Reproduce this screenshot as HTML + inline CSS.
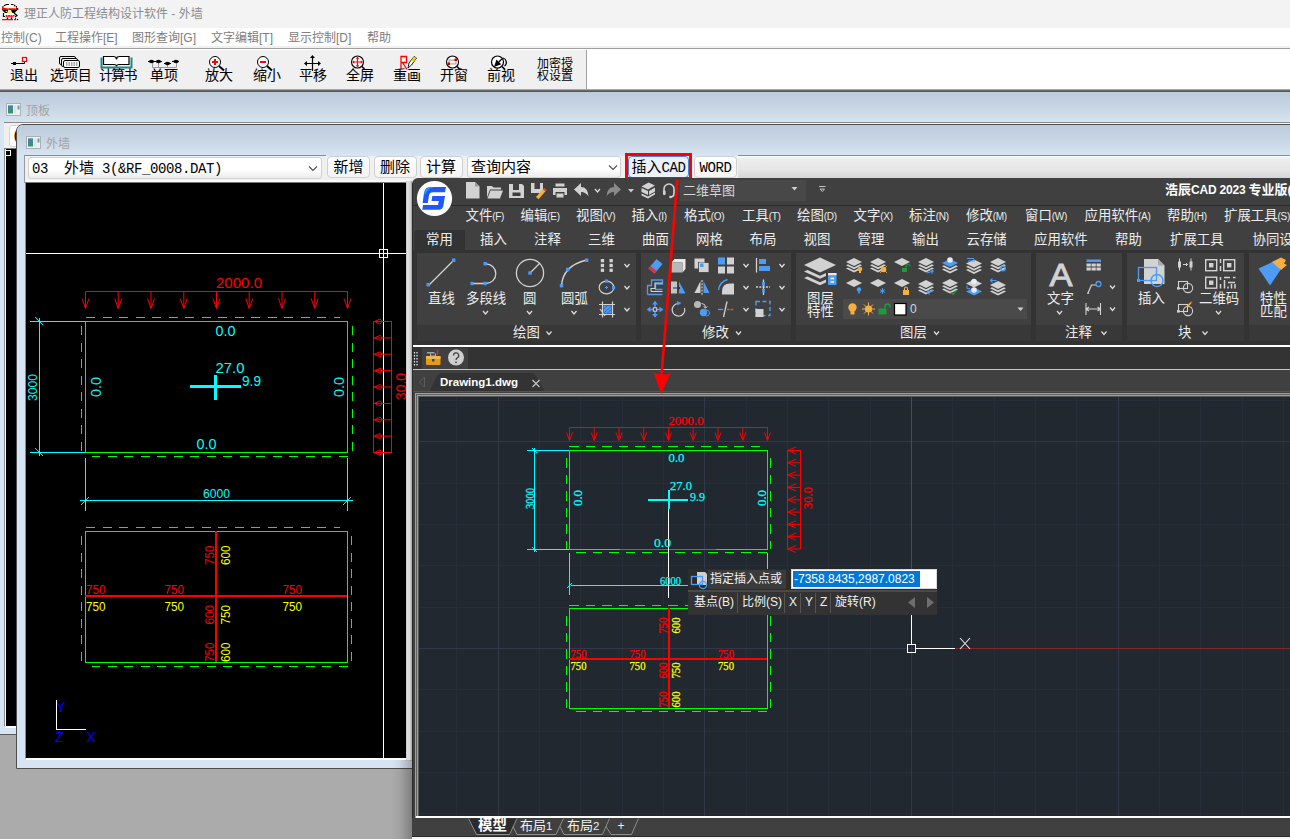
<!DOCTYPE html>
<html lang="zh-CN">
<head>
<meta charset="utf-8">
<title>理正人防工程结构设计软件 - 外墙</title>
<style>
*{box-sizing:border-box;margin:0;padding:0}
html,body{width:1290px;height:839px;overflow:hidden;background:#ababab}
body{position:relative;font-family:"Liberation Sans","Noto Sans CJK SC",sans-serif;font-size:12px;color:#000}
.abs{position:absolute}
#titlebar{left:0;top:0;width:1290px;height:28px;background:#f3f3f3}
#titlebar .t{left:24px;top:6.500px;font-size:12px;line-height:15px;color:#8c8c8c;white-space:nowrap}
#menubar{left:0;top:28px;width:1290px;height:18px;background:#fff}
#menubar span{position:absolute;top:3px;font-size:12px;line-height:15px;color:#7d7d7d;white-space:nowrap}
#tbline{left:0;top:46px;width:1290px;height:3px;background:#a0a0a0;border-top:2px solid #f0f0f0}
#toolbar{left:0;top:49px;width:1290px;height:40px;background:#fff}
#toolbar .bg{left:0;top:1px;width:587px;height:39px;background:#f0f0f0;border-right:1px solid #a0a0a0}
.tb{position:absolute;top:18px;font-size:14px;line-height:16px;color:#000;white-space:nowrap;letter-spacing:-0.1px;font-family:"Liberation Sans","Noto Sans CJK SC",sans-serif}
.tbi{position:absolute;top:0;left:0}
#mdiedge{left:0;top:89px;width:1290px;height:3px;background:linear-gradient(#c8c8c8,#6a6a6a 50%,#4d4d4d)}
/* child windows */
.cap{background:linear-gradient(#bccbdb,#c5d3e2 40%,#d7e4f1)}
#w1{left:0;top:92px;width:1290px;height:643px;background:#d7e4f3;border-bottom:1px solid #5a5a5a}
#w1 .cap{left:0;top:0;width:1290px;height:31px}
#w1 .ttl,#w2 .ttl{font-size:12px;line-height:14px;color:#a3a3a3;white-space:nowrap}
#w2{left:16px;top:124px;width:1280px;height:645px;background:#d7e4f3;border:1px solid #4e4e4e;border-radius:7px 0 0 0}
#w2 .cap{left:0;top:0;width:1280px;height:30px;border-radius:6px 0 0 0}
.btn{position:absolute;top:156px;height:22px;border:1px solid #d0d0d0;border-radius:4px;background:linear-gradient(#fefefe,#f4f4f4);font-size:15px;line-height:19px;padding-top:1.500px;text-align:center;white-space:nowrap;font-family:"Liberation Mono","Noto Sans CJK SC",monospace}
.cmb{position:absolute;top:155.500px;height:22px;border:1px solid #d0d0d0;border-radius:3px;background:linear-gradient(#fff 60%,#ececec);font-size:15px;line-height:19px;padding-top:2px;white-space:nowrap;font-family:"Liberation Mono","Noto Sans CJK SC",monospace}
</style>
</head>
<body>
<!-- ===== main title bar ===== -->
<div id="titlebar" class="abs">
<svg class="abs" style="left:0;top:0" width="22" height="24" viewBox="0 0 22 24">
<path d="M4 6.500Q5 4 9 4H11Q15 4 16 6.500L17 10H2.500Z" fill="#fff"/>
<path d="M6 4.500h3M11 4.500h2.500M4 5.800l2-1M14 5l1.500 1.500M2.500 6.500h1M16 6.500h1" stroke="#000" stroke-width="1.100" fill="none"/>
<path d="M2 6.800L6 8.200H13L17 6.800V10H2Z" fill="#f00"/>
<path d="M4 6.200l2 1.800h-2zM13 8.200l3-2.200v2.500zM8 8.200l1 1h-1.500z" fill="#ff0"/>
<circle cx="17.500" cy="9" r=".9" fill="#000"/>
<path d="M2 10H8L7.500 12.500Q6 13.500 4.500 12.500ZM11 10H17.500L15 12.500Q13.500 13.500 12 12.500Z" fill="#000"/>
<circle cx="6.300" cy="11.400" r=".7" fill="#fff"/>
<path d="M8.200 10l2.800 3h-3z" fill="#ff0"/>
<path d="M4 13H15V17H4Z" fill="#fff"/>
<path d="M3.500 13V16.500H5M14 13l3 2.500-2 1.500" stroke="#000" stroke-width="1.200" fill="none"/>
<path d="M4.500 15h10.500l-1.200 2l-1.200-2l-1.200 2l-1.200-2l-1.200 2l-1.200-2l-1.200 2l-1.200-2z" fill="#f00"/>
<path d="M5.500 16.800h8" stroke="#f00" stroke-width="1"/>
<path d="M7.500 17.500v2M11.500 17.500v2" stroke="#000" stroke-width="1.300"/>
<path d="M2 19.600h11M14 19.600h2" stroke="#f00" stroke-width="1.200"/>
<circle cx="17.500" cy="19.500" r=".8" fill="#000"/><circle cx="15.500" cy="18.500" r=".6" fill="#000"/>
</svg>
<div class="abs t">理正人防工程结构设计软件 - 外墙</div>
</div>
<!-- ===== menu bar ===== -->
<div id="menubar" class="abs">
<span style="left:1px">控制(C)</span><span style="left:55px">工程操作[E]</span><span style="left:132px">图形查询[G]</span><span style="left:211px">文字编辑[T]</span><span style="left:288px">显示控制[D]</span><span style="left:367px">帮助</span>
</div>
<div id="tbline" class="abs"></div>
<!-- ===== toolbar ===== -->
<div id="toolbar" class="abs">
<div class="abs bg"></div>
<svg class="tbi" width="590" height="40" viewBox="0 0 590 40"><path d="M11 14.5H24.5V12" fill="none" stroke="#000" stroke-width="1"/><rect x="13" y="13" width="3" height="3" fill="#000"/><rect x="22.500" y="8.5" width="4" height="4" fill="#fff" stroke="#f00" stroke-width="1.200"/>
<rect x="59.500" y="7.5" width="16" height="8" rx="1.500" fill="#f0f0f0" stroke="#000"/><rect x="61.500" y="9.5" width="16" height="8" rx="1.500" fill="#f0f0f0" stroke="#000"/><rect x="63.500" y="11.5" width="16" height="7" rx="1.500" fill="#fff" stroke="#000"/><path d="M66 14h12M66 16h12" stroke="#555" stroke-dasharray="1.500 1"/>
<path d="M101.500 8.5V18.5H131.500V8.5" fill="none" stroke="#1f8a8a" stroke-width="2"/><path d="M103.500 7.5h10q3 0 3 3q0-3 3-3h9.500v8h-10q-2.500 0-2.500 2q0-2-2.500-2h-10.500z" fill="#fff" stroke="#000" stroke-width="1.200"/>
<path d="M152.500 12V18.5H176.500V12M158.500 12V18.5M167.500 14V18.5" fill="none" stroke="#999"/><path d="M148 12.5H162M164 14.5H171M172 12.5H179" stroke="#000" stroke-width="1.200"/>
<ellipse cx="151.5" cy="12.5" rx="2.600" ry="1.700" fill="#000"/>
<ellipse cx="158.5" cy="12.5" rx="2.600" ry="1.700" fill="#000"/>
<ellipse cx="167.5" cy="14.5" rx="2.600" ry="1.700" fill="#000"/>
<ellipse cx="176" cy="12.5" rx="2.600" ry="1.700" fill="#000"/>
<circle cx="215" cy="13" r="5.500" fill="#fff" stroke="#000" stroke-width="1"/><path d="M219 17l5 4.500" stroke="#000" stroke-width="2"/>
<path d="M212 13h6M215 10v6" stroke="#f00" stroke-width="2"/>
<circle cx="263" cy="13" r="5.500" fill="#fff" stroke="#000" stroke-width="1"/><path d="M267 17l5 4.500" stroke="#000" stroke-width="2"/>
<path d="M260 13h6" stroke="#f00" stroke-width="2"/>
<path d="M312.500 7V22M305 14.5H320" stroke="#000" stroke-width="1.200"/><path d="M312.500 6l-2.500 3h5zM304 14.5l3-2.500v5zM321 14.5l-3-2.500v5z" fill="#000"/>
<circle cx="357.500" cy="13" r="6" fill="#fff" stroke="#000" stroke-width="1.100"/><path d="M357.500 8.5v9M353 13h9" stroke="#f00" stroke-width="1.200"/><path d="M357.500 7.5l-1.800 2.200h3.600zM357.500 18.5l-1.800-2.200h3.600zM352 13l2.200-1.800v3.600zM363 13l-2.200-1.800v3.600z" fill="#f00"/><path d="M362 17.5l2.500 2.500" stroke="#000" stroke-width="1.500"/>
<path d="M401 20V7.5H406.500V13.5H401M402.500 13.5L407 20.5" fill="none" stroke="#f00" stroke-width="1.300"/><path d="M408 19l1-5 5-6.500 2.500 1.500-5 7z" fill="#fff" stroke="#000" stroke-width=".9"/><path d="M411 11.5l3-4 2.500 1.500-3 4z" fill="#e5d200"/>
<circle cx="452.500" cy="13" r="6" fill="#fff" stroke="#000" stroke-width="1.100"/><rect x="449" y="11" width="7" height="4" fill="#eee" stroke="#888" stroke-width=".8"/><rect x="447.500" y="13.5" width="2.500" height="2.500" fill="#c00"/><rect x="454.500" y="9.5" width="2.500" height="2.500" fill="#c00"/><path d="M457 17.5l3 3" stroke="#000" stroke-width="1.600"/>
<circle cx="497.500" cy="13" r="6" fill="#fff" stroke="#000" stroke-width="1.200"/><path d="M503 9a4.500 4.500 0 0 1 1.500 8" fill="none" stroke="#000" stroke-width="1.200"/><path d="M494 18l2.500-7.500 1.800 2 3.200-3 .8.800-3 3.200 2 1.800z" fill="#000"/><path d="M502 17.5l3 3" stroke="#000" stroke-width="1.500"/></svg>
<span class="tb" style="left:10px">退出</span>
<span class="tb" style="left:50px">选项目</span>
<span class="tb" style="left:99px;letter-spacing:-1.8px">计算书</span>
<span class="tb" style="left:150px">单项</span>
<span class="tb" style="left:205px">放大</span>
<span class="tb" style="left:253px">缩小</span>
<span class="tb" style="left:299px">平移</span>
<span class="tb" style="left:346px">全屏</span>
<span class="tb" style="left:393px">重画</span>
<span class="tb" style="left:440px">开窗</span>
<span class="tb" style="left:487px">前视</span>
<span class="tb" style="left:537px;top:9px;font-size:12px;line-height:12px;letter-spacing:0">加密授<br>权设置</span>
</div>
<div id="mdiedge" class="abs"></div>

<!-- ===== child window 1: 顶板 ===== -->
<div id="w1" class="abs">
<div class="abs cap"></div>
<svg class="abs" style="left:6px;top:11px" width="15" height="13" viewBox="0 0 15 13"><rect x=".5" y=".5" width="14" height="12" fill="#eef1f4" stroke="#aab0b8"/><rect x="2" y="2.5" width="5" height="8" fill="#3d8f78"/><rect x="2" y="2.5" width="5" height="4" fill="#4a7fb0" opacity=".6"/><rect x="8" y="2.5" width="2.5" height="8" fill="#dfe3e6"/><rect x="11.5" y="2.5" width="2" height="4" fill="#6aa58f"/></svg>
<div class="abs ttl" style="left:26px;top:12px">顶板</div>
<div class="abs" style="left:4px;top:30px;width:1286px;height:27px;background:#f0f0f0;border-top:1px solid #8a8a8a"></div>
<div class="abs" style="left:9px;top:32.500px;width:300px;height:22px;background:#fff;border:1px solid #d4d4d4;border-radius:3px"></div>
<div class="abs" style="left:12px;top:35px;font-size:15px;line-height:19px;font-family:'Liberation Mono',monospace">(</div>
<div class="abs" style="left:4px;top:56px;width:13px;height:578px;background:#000;border-left:1px solid #8a8a8a;border-top:1px solid #777"></div>
<div class="abs" style="left:5px;top:57px;width:1px;height:578px;background:#fff"></div>
<div class="abs" style="left:5px;top:634px;width:12px;height:2px;background:#fff"></div>
<div class="abs" style="left:5px;top:58px;width:6px;height:6px;border:1px solid #fff;background:#000"></div>
</div>

<div class="abs" style="left:18px;top:123px;width:1272px;height:1px;background:#f2f5f8"></div>
<!-- ===== child window 2: 外墙 ===== -->
<div id="w2" class="abs">
<div class="abs cap"></div>
<svg class="abs" style="left:9px;top:11px" width="15" height="13" viewBox="0 0 15 13"><rect x=".5" y=".5" width="14" height="12" fill="#eef1f4" stroke="#aab0b8"/><rect x="2" y="2.5" width="5" height="8" fill="#3d8f78"/><rect x="2" y="2.5" width="5" height="4" fill="#4a7fb0" opacity=".6"/><rect x="8" y="2.5" width="2.5" height="8" fill="#dfe3e6"/><rect x="11.5" y="2.5" width="2" height="4" fill="#6aa58f"/></svg>
<div class="abs ttl" style="left:29px;top:12px">外墙</div>
</div>
<!-- client area of 外墙 (page coords) -->
<div class="abs" style="left:24px;top:155px;width:1266px;height:28px;background:#f0f0f0;border-left:1px solid #9a9a9a;border-top:1px solid #dfe3e8"></div>
<div class="abs" style="left:24px;top:155px;width:302px;height:1px;background:#8c8c8c"></div>
<div class="abs" style="left:738px;top:155px;width:552px;height:23px;background:linear-gradient(#fff,#eee 12%,#e6e6e6 60%,#d6d6d6);border-top:1px solid #8c8c8c"></div>
<div class="cmb" style="left:28px;top:157px;width:294px;padding:1px 0 0 3px;line-height:21px"><span style="font-size:14px;letter-spacing:-.4px">03&nbsp;&nbsp;</span>外墙<span style="font-size:14px;letter-spacing:-.4px">&nbsp;3(&amp;RF_0008.DAT)</span></div>
<svg class="abs" style="left:308px;top:165px" width="12" height="8"><path d="M1 1.500l4 4 4-4" fill="none" stroke="#555" stroke-width="1.2"/></svg>
<div class="btn" style="left:327px;width:43px">新增</div>
<div class="btn" style="left:373.500px;width:43px">删除</div>
<div class="btn" style="left:419.500px;width:43px">计算</div>
<div class="cmb" style="left:467px;width:154px;padding-left:3px">查询内容</div>
<svg class="abs" style="left:608px;top:164px" width="12" height="8"><path d="M1 1.500l4 4 4-4" fill="none" stroke="#555" stroke-width="1.2"/></svg>
<div class="btn" style="left:628px;width:61px;border-color:#3f8ad8;background:#eaf1fa"><span style="">插入</span><span style="font-size:14px;letter-spacing:-.4px">CAD</span></div>
<div class="abs" style="left:625px;top:153px;width:67px;height:27px;border:3px solid #f00"></div>
<div class="btn" style="left:694px;width:43px;font-size:14px;letter-spacing:-.4px">WORD</div>

<!-- left CAD view -->
<div class="abs" style="left:25px;top:180px;width:381px;height:2px;background:#fafafa"></div>
<div class="abs" style="left:25px;top:182px;width:383px;height:578px;background:#000;border-left:1px solid #8a8a8a;border-right:2px solid #fff;border-bottom:2px solid #fff;border-top:1px solid #777"></div>
<svg class="abs" style="left:26px;top:183px" width="380" height="575" viewBox="26 183 380 575"><g shape-rendering="crispEdges" fill="none" stroke-width="1">
<path d="M26 253.5H406M383.5 183V758" stroke="#fff"/>
<rect x="379.5" y="249.5" width="8" height="8" stroke="#fff"/>
<path d="M85.5 291.5H347.5" stroke="#f00"/>
</g>
<g fill="none" stroke="#f00" stroke-width="1">
<path d="M85.5 291.5V308M82.0 298.5L85.5 308.5L89.0 298.5"/>
<path d="M118.2 291.5V308M114.8 298.5L118.2 308.5L121.8 298.5"/>
<path d="M151.0 291.5V308M147.5 298.5L151.0 308.5L154.5 298.5"/>
<path d="M183.8 291.5V308M180.2 298.5L183.8 308.5L187.2 298.5"/>
<path d="M216.5 291.5V308M213.0 298.5L216.5 308.5L220.0 298.5"/>
<path d="M249.2 291.5V308M245.8 298.5L249.2 308.5L252.8 298.5"/>
<path d="M282.0 291.5V308M278.5 298.5L282.0 308.5L285.5 298.5"/>
<path d="M314.8 291.5V308M311.2 298.5L314.8 308.5L318.2 298.5"/>
<path d="M347.5 291.5V308M344.0 298.5L347.5 308.5L351.0 298.5"/>
</g>
<g font-family="Liberation Sans,sans-serif" font-weight="400">
<text x="216" y="288.3" fill="#f00" font-size="15" text-anchor="start" textLength="46" lengthAdjust="spacingAndGlyphs">2000.0</text>
</g>
<g shape-rendering="crispEdges" fill="none" stroke="#0f0" stroke-width="1">
<rect x="85.5" y="321.5" width="262" height="131"/>
<path d="M86 317.5H340M347.5 456.5H92" stroke-dasharray="9 7.5"/>
<path d="M81.5 326V452M352.5 326V452" stroke-dasharray="9 7.5"/>
<rect x="85.5" y="531.5" width="262" height="131"/>
<path d="M86 527.5H340M347.5 666.5H92" stroke-dasharray="9 7.5"/>
<path d="M81.5 536V662M351.5 536V662" stroke-dasharray="9 7.5"/>
</g>
<g shape-rendering="crispEdges" fill="none" stroke="#0ff" stroke-width="1">
<path d="M30 321.5H85M30 452.5H85M39.5 318V456"/>
<path d="M85.5 458V511M347.5 458V511M80 500.5H353"/>
</g>
<g fill="none" stroke="#0ff" stroke-width="1">
<path d="M35 317l8 8M35 448l8 8M81 505l8-8M343 505l8-8"/>
</g>
<g shape-rendering="crispEdges" stroke="#0ff" stroke-width="3"><path d="M190 386.5H241M215.5 375V400"/></g>
<g shape-rendering="crispEdges" fill="none" stroke="#f00" stroke-width="1"><rect x="373.5" y="321.5" width="18" height="131"/></g>
<g fill="none" stroke="#f00" stroke-width="1">
<path d="M391.5 321.5H374M380 319.0L374.5 321.5L380 324.0M380 319.0Q384 321.5 380 324.0"/>
<path d="M391.5 337.9H374M380 335.4L374.5 337.9L380 340.4M380 335.4Q384 337.9 380 340.4"/>
<path d="M391.5 354.2H374M380 351.8L374.5 354.2L380 356.8M380 351.8Q384 354.2 380 356.8"/>
<path d="M391.5 370.6H374M380 368.1L374.5 370.6L380 373.1M380 368.1Q384 370.6 380 373.1"/>
<path d="M391.5 387.0H374M380 384.5L374.5 387.0L380 389.5M380 384.5Q384 387.0 380 389.5"/>
<path d="M391.5 403.4H374M380 400.9L374.5 403.4L380 405.9M380 400.9Q384 403.4 380 405.9"/>
<path d="M391.5 419.8H374M380 417.2L374.5 419.8L380 422.2M380 417.2Q384 419.8 380 422.2"/>
<path d="M391.5 436.1H374M380 433.6L374.5 436.1L380 438.6M380 433.6Q384 436.1 380 438.6"/>
<path d="M391.5 452.5H374M380 450.0L374.5 452.5L380 455.0M380 450.0Q384 452.5 380 455.0"/>
</g>
<g shape-rendering="crispEdges" stroke="#f00" stroke-width="2"><path d="M85 596H347M215.5 531V662"/></g>
<g font-family="Liberation Sans,sans-serif" font-weight="400">
<text x="215.5" y="336.2" fill="#0ff" font-size="15" text-anchor="start" textLength="20" lengthAdjust="spacingAndGlyphs">0.0</text>
<text x="215.5" y="373.4" fill="#0ff" font-size="15" text-anchor="start" textLength="29" lengthAdjust="spacingAndGlyphs">27.0</text>
<text x="242" y="386" fill="#0ff" font-size="15" text-anchor="start" textLength="19" lengthAdjust="spacingAndGlyphs">9.9</text>
<text x="196.5" y="449.2" fill="#0ff" font-size="15" text-anchor="start" textLength="20" lengthAdjust="spacingAndGlyphs">0.0</text>
<text x="203" y="498" fill="#0ff" font-size="13.5" text-anchor="start" textLength="27" lengthAdjust="spacingAndGlyphs">6000</text>
<text x="37" y="401" fill="#0ff" font-size="13.5" text-anchor="start" transform="rotate(-90 37 401)" textLength="27" lengthAdjust="spacingAndGlyphs">3000</text>
<text x="101" y="397" fill="#0ff" font-size="15" text-anchor="start" transform="rotate(-90 101 397)" textLength="20" lengthAdjust="spacingAndGlyphs">0.0</text>
<text x="344" y="397" fill="#0ff" font-size="15" text-anchor="start" transform="rotate(-90 344 397)" textLength="20" lengthAdjust="spacingAndGlyphs">0.0</text>
<text x="406" y="400" fill="#f00" font-size="15" text-anchor="start" transform="rotate(-90 406 400)" textLength="27" lengthAdjust="spacingAndGlyphs">30.0</text>
<text x="86" y="594" fill="#f00" font-size="13.5" text-anchor="start" textLength="19.5" lengthAdjust="spacingAndGlyphs">750</text>
<text x="86" y="611" fill="#ff0" font-size="13.5" text-anchor="start" textLength="19.5" lengthAdjust="spacingAndGlyphs">750</text>
<text x="164.5" y="594" fill="#f00" font-size="13.5" text-anchor="start" textLength="19.5" lengthAdjust="spacingAndGlyphs">750</text>
<text x="164.5" y="611" fill="#ff0" font-size="13.5" text-anchor="start" textLength="19.5" lengthAdjust="spacingAndGlyphs">750</text>
<text x="282.5" y="594" fill="#f00" font-size="13.5" text-anchor="start" textLength="19.5" lengthAdjust="spacingAndGlyphs">750</text>
<text x="282.5" y="611" fill="#ff0" font-size="13.5" text-anchor="start" textLength="19.5" lengthAdjust="spacingAndGlyphs">750</text>
<text x="213.5" y="565" fill="#f00" font-size="13.5" text-anchor="start" transform="rotate(-90 213.5 565)" textLength="19.5" lengthAdjust="spacingAndGlyphs">750</text>
<text x="230" y="565" fill="#ff0" font-size="13.5" text-anchor="start" transform="rotate(-90 230 565)" textLength="19.5" lengthAdjust="spacingAndGlyphs">600</text>
<text x="213.5" y="624.5" fill="#f00" font-size="13.5" text-anchor="start" transform="rotate(-90 213.5 624.5)" textLength="19.5" lengthAdjust="spacingAndGlyphs">600</text>
<text x="230" y="624.5" fill="#ff0" font-size="13.5" text-anchor="start" transform="rotate(-90 230 624.5)" textLength="19.5" lengthAdjust="spacingAndGlyphs">750</text>
<text x="213.5" y="662" fill="#f00" font-size="13.5" text-anchor="start" transform="rotate(-90 213.5 662)" textLength="19.5" lengthAdjust="spacingAndGlyphs">750</text>
<text x="230" y="662" fill="#ff0" font-size="13.5" text-anchor="start" transform="rotate(-90 230 662)" textLength="19.5" lengthAdjust="spacingAndGlyphs">600</text>
<text x="56" y="712" fill="#00f" font-size="14" text-anchor="start">Y</text>
<text x="55" y="742" fill="#00f" font-size="14" text-anchor="start">Z</text>
<text x="86.5" y="742" fill="#00f" font-size="14" text-anchor="start">X</text>
</g>
<g shape-rendering="crispEdges" fill="none" stroke="#fff"><path d="M56.5 700V729.5H86"/></g></svg>

<!-- ===== CAD window ===== -->
<div class="abs" style="left:406px;top:181px;width:6px;height:580px;background:linear-gradient(90deg,#bcbcbc,#e2e2e2 25%,#d6d6d6 60%,#c6c6c6 85%,#8c8c8c)"></div>
<div class="abs" style="left:392px;top:760px;width:20px;height:79px;background:linear-gradient(90deg,rgba(0,0,0,0),rgba(0,0,0,.06) 40%,rgba(0,0,0,.26))"></div>
<div id="cad" class="abs" style="left:412px;top:178px;width:878px;height:661px;background:#404040;border-radius:6px 0 0 0;overflow:hidden">
<div class="abs" style="left:-412px;top:-178px;width:1290px;height:839px">
<style>
.c{position:absolute;white-space:nowrap;color:#ececec;font-family:"Liberation Sans","Noto Sans CJK SC",sans-serif}
.m{top:207px;font-size:13.400px;line-height:17px}
.m i{font-style:normal;font-size:10px;letter-spacing:-0.3px}
.rt{top:231px;font-size:13.400px;line-height:17px}
.pn{position:absolute;top:253px;height:88px;background:#404040}
.pn b{position:absolute;left:0;right:0;bottom:0;height:16px;background:#383838}
.pl{top:291.500px;font-size:13.400px;line-height:13px;text-align:center}
.pt{top:324px;font-size:13.400px;line-height:17px}
</style>
<div class="abs" style="left:412px;top:205px;width:878px;height:1px;background:#2a2a2a"></div>
<div class="abs" style="left:680px;top:180px;width:126px;height:21px;background:#484848"></div>
<div class="c" style="left:683px;top:182px;font-size:13px;line-height:17px;color:#d8d8d8">二维草图</div>
<div class="c" style="left:1165px;top:181px;font-size:13px;line-height:18px;font-weight:bold;color:#fff">浩辰<span style="font-size:12px;letter-spacing:-.2px">CAD 2023 </span>专业版(</div>
<div class="c m" style="left:465.5px">文件<i>(F)</i></div>
<div class="c m" style="left:520.5px">编辑<i>(E)</i></div>
<div class="c m" style="left:576px">视图<i>(V)</i></div>
<div class="c m" style="left:631.5px">插入<i>(I)</i></div>
<div class="c m" style="left:684px">格式<i>(O)</i></div>
<div class="c m" style="left:742px">工具<i>(T)</i></div>
<div class="c m" style="left:797px">绘图<i>(D)</i></div>
<div class="c m" style="left:853.5px">文字<i>(X)</i></div>
<div class="c m" style="left:909px">标注<i>(N)</i></div>
<div class="c m" style="left:966px">修改<i>(M)</i></div>
<div class="c m" style="left:1025px">窗口<i>(W)</i></div>
<div class="c m" style="left:1084.5px">应用软件<i>(A)</i></div>
<div class="c m" style="left:1167px">帮助<i>(H)</i></div>
<div class="c m" style="left:1224px">扩展工具<i>(S)</i></div>
<div class="abs" style="left:414px;top:230px;width:51px;height:21px;background:#333;border-radius:4px 0 0 0"></div>
<div class="c rt" style="left:426px">常用</div>
<div class="c rt" style="left:480px">插入</div>
<div class="c rt" style="left:534px">注释</div>
<div class="c rt" style="left:588px">三维</div>
<div class="c rt" style="left:642px">曲面</div>
<div class="c rt" style="left:696px">网格</div>
<div class="c rt" style="left:749.5px">布局</div>
<div class="c rt" style="left:803.5px">视图</div>
<div class="c rt" style="left:857.5px">管理</div>
<div class="c rt" style="left:912px">输出</div>
<div class="c rt" style="left:966.5px">云存储</div>
<div class="c rt" style="left:1034px">应用软件</div>
<div class="c rt" style="left:1115px">帮助</div>
<div class="c rt" style="left:1170px">扩展工具</div>
<div class="c rt" style="left:1252.5px">协同设计</div>
<div class="abs" style="left:412px;top:250px;width:878px;height:95px;background:#333"></div>
<div class="pn" style="left:417px;width:219px"><b></b></div>
<div class="c pt" style="left:513px">绘图</div>
<div class="pn" style="left:641px;width:150px"><b></b></div>
<div class="c pt" style="left:702px">修改</div>
<div class="pn" style="left:796px;width:235px"><b></b></div>
<div class="c pt" style="left:900px">图层</div>
<div class="pn" style="left:1036px;width:86px"><b></b></div>
<div class="c pt" style="left:1065px">注释</div>
<div class="pn" style="left:1127px;width:117px"><b></b></div>
<div class="c pt" style="left:1178px">块</div>
<div class="pn" style="left:1249px;width:46px"><b></b></div>
<div class="abs" style="left:843px;top:299px;width:184px;height:20px;background:#4a4a4a"></div>
<div class="c pl" style="left:428px">直线</div>
<div class="c pl" style="left:466px">多段线</div>
<div class="c pl" style="left:523px">圆</div>
<div class="c pl" style="left:561px">圆弧</div>
<div class="c pl" style="left:1047px">文字</div>
<div class="c pl" style="left:1138px">插入</div>
<div class="c pl" style="left:1199px">二维码</div>
<div class="c pl" style="left:807px;text-align:left">图层<br>特性</div>
<div class="c pl" style="left:1260px;text-align:left">特性<br>匹配</div>
<div class="c" style="left:910px;top:301px;font-size:12px;line-height:16px;color:#cfd6e6">0</div>
<div class="abs" style="left:412px;top:345px;width:878px;height:2px;background:#fff"></div>
<div class="abs" style="left:412px;top:347px;width:878px;height:22px;background:#333"></div>
<div class="abs" style="left:422px;top:348px;width:46px;height:21px;background:#404040"></div>
<div class="abs" style="left:412px;top:369px;width:878px;height:1px;background:#c4c4c4"></div>
<div class="abs" style="left:412px;top:370px;width:878px;height:22px;background:#404040"></div>
<svg class="abs" style="left:412px;top:178px" width="878" height="192" viewBox="412 178 878 192">
<circle cx="434.5" cy="198.5" r="17.6" fill="#fff"/>
<path d="M430 187H446L445 192.300H433Q429.500 192.300 429 195.500L427.800 203H422.600L424 193Q425 187 430 187Z" fill="#2158f5"/>
<path d="M432.300 196H445L443.300 206Q442.500 209.700 439 209.700H422.300L423 205H438L438.800 201H431.500Z" fill="#2158f5"/>
<path d="M423.800 194.500q.8-7 7.500-7.500h3q-7 1.500-8.500 6.500z" fill="#22a2f7"/>
<g fill="#d2d2d2">
<path d="M466 182h9l4.500 4.500v12h-13.500z"/><path d="M475 182l4.500 4.500h-4.500z" fill="#9a9a9a"/>
<path d="M487 186h5l1.500 1.500h7.500v2h-11l-3 8zM490.500 190.500h12.500l-3 8h-12.500z"/>
<path d="M509 184h4v6h6v-6h3l2 2v12h-15zM512.500 192.500v3.500h8v-3.500z"/>
<path d="M531 183h3.500v6h5.500v-6h3v10h-12z"/>
<path d="M553 188h14v7h-2.500v-3h-9v3h-2.500zM555.500 183.500h9v3h-9zM556.500 193.500h7v4h-7z"/>
<path d="M574 189.500l7-6.500v4q7 0 7.500 9.500q-2.500-4.500-7.500-4.500v4z"/>
<path d="M641.500 186.500l7-4 6.500 3-7 4zM641.500 188v4l6.500 3v-4zM649 191l6-3.500v4l-6 3.500zM641.500 193.500l6.500 3 7-4v2l-7 4-6.500-3z"/>
</g>
<path d="M536 197l7-8 2.500 2.200-7 8z" fill="#f5b041"/><path d="M543 189l1.200-1.300 2.500 2.200-1.200 1.300z" fill="#e0443a"/>
<path d="M621 189.500l-7-6.500v4q-7 0-7.500 9.500q2.500-4.500 7.500-4.500v4z" fill="#8a8a8a"/>
<path d="M664 192v-3a5 5 0 0 1 10 0v4.500q0 3-3 3.500" fill="none" stroke="#d2d2d2" stroke-width="1.600"/><rect x="663" y="190.500" width="2.600" height="4.500" rx="1" fill="#d2d2d2"/><circle cx="670.500" cy="197" r="1.300" fill="#d2d2d2"/>
<path d="M595 189l2.5 3l2.5 -3" fill="none" stroke="#e0e0e0" stroke-width="1.200"/>
<path d="M628 189h6l-3 3.500z" fill="#c8c8c8"/>
<path d="M791.500 187h6l-3 3.500z" fill="#d0d0d0"/>
<path d="M819 186.500h6.500M820 189h4.500l-2.200 2.600z" fill="none" stroke="#c0c0c0" stroke-width="1"/>
<path d="M546.5 331.5l2.5 3l2.5 -3" fill="none" stroke="#e0e0e0" stroke-width="1.200"/>
<path d="M736 331.5l2.5 3l2.5 -3" fill="none" stroke="#e0e0e0" stroke-width="1.200"/>
<path d="M934 331.5l2.5 3l2.5 -3" fill="none" stroke="#e0e0e0" stroke-width="1.200"/>
<path d="M1101.5 331.5l2.5 3l2.5 -3" fill="none" stroke="#e0e0e0" stroke-width="1.200"/>
<path d="M1202.5 331.5l2.5 3l2.5 -3" fill="none" stroke="#e0e0e0" stroke-width="1.200"/>
<path d="M483 311l2.5 3l2.5 -3" fill="none" stroke="#e0e0e0" stroke-width="1.200"/>
<path d="M527 311l2.5 3l2.5 -3" fill="none" stroke="#e0e0e0" stroke-width="1.200"/>
<path d="M571.5 311l2.5 3l2.5 -3" fill="none" stroke="#e0e0e0" stroke-width="1.200"/>
<path d="M1057 311l2.5 3l2.5 -3" fill="none" stroke="#e0e0e0" stroke-width="1.200"/>
<path d="M1216 311l2.5 3l2.5 -3" fill="none" stroke="#e0e0e0" stroke-width="1.200"/>
<path d="M624.5 264l2.5 3l2.5 -3" fill="none" stroke="#e0e0e0" stroke-width="1.200"/>
<path d="M743.5 264l2.5 3l2.5 -3" fill="none" stroke="#e0e0e0" stroke-width="1.200"/>
<path d="M779.5 264l2.5 3l2.5 -3" fill="none" stroke="#e0e0e0" stroke-width="1.200"/>
<path d="M624.5 286l2.5 3l2.5 -3" fill="none" stroke="#e0e0e0" stroke-width="1.200"/>
<path d="M743.5 286l2.5 3l2.5 -3" fill="none" stroke="#e0e0e0" stroke-width="1.200"/>
<path d="M779.5 286l2.5 3l2.5 -3" fill="none" stroke="#e0e0e0" stroke-width="1.200"/>
<path d="M624.5 308l2.5 3l2.5 -3" fill="none" stroke="#e0e0e0" stroke-width="1.200"/>
<path d="M743.5 308l2.5 3l2.5 -3" fill="none" stroke="#e0e0e0" stroke-width="1.200"/>
<path d="M779.5 308l2.5 3l2.5 -3" fill="none" stroke="#e0e0e0" stroke-width="1.200"/>
<path d="M1110 285.5l2.5 3l2.5 -3" fill="none" stroke="#e0e0e0" stroke-width="1.200"/>
<path d="M1110 307.5l2.5 3l2.5 -3" fill="none" stroke="#e0e0e0" stroke-width="1.200"/>
<path d="M429 285L454 260" stroke="#d2d2d2" stroke-width="1.300"/><rect x="426.500" y="283" width="3.400" height="3.400" fill="#4d9bf5"/><rect x="452" y="258.500" width="3.400" height="3.400" fill="#4d9bf5"/>
<path d="M472 283.500h14a9.800 9.800 0 0 0 0-19.600" fill="none" stroke="#d2d2d2" stroke-width="1.300"/><rect x="470.500" y="281.800" width="3.400" height="3.400" fill="#4d9bf5"/><rect x="483.500" y="281.800" width="3.400" height="3.400" fill="#4d9bf5"/><rect x="483.500" y="262" width="3.400" height="3.400" fill="#4d9bf5"/>
<circle cx="530" cy="273" r="13.600" fill="none" stroke="#d2d2d2" stroke-width="1.300"/><path d="M530 273l10-10" stroke="#d2d2d2" stroke-width="1.300"/><rect x="528.300" y="271.300" width="3.400" height="3.400" fill="#4d9bf5"/>
<path d="M561.500 286q1-20 25-26" fill="none" stroke="#d2d2d2" stroke-width="1.300"/><rect x="559.800" y="284" width="3.400" height="3.400" fill="#4d9bf5"/><rect x="566" y="267.800" width="3.400" height="3.400" fill="#4d9bf5"/><rect x="585" y="258.500" width="3.400" height="3.400" fill="#4d9bf5"/>
<rect x="600.8" y="259" width="3.300" height="3.300" fill="#d2d2d2"/>
<rect x="609.5" y="259" width="3.300" height="3.300" fill="#d2d2d2"/>
<rect x="600.8" y="263.8" width="3.300" height="3.300" fill="#d2d2d2"/>
<rect x="609.5" y="263.8" width="3.300" height="3.300" fill="#d2d2d2"/>
<rect x="600.8" y="268.6" width="3.300" height="3.300" fill="#d2d2d2"/>
<rect x="609.5" y="268.6" width="3.300" height="3.300" fill="#d2d2d2"/>
<ellipse cx="606.500" cy="287.500" rx="7.300" ry="6.300" fill="none" stroke="#d2d2d2" stroke-width="1.200"/><rect x="605" y="279.500" width="3.200" height="3.200" fill="#4d9bf5"/><rect x="612" y="286" width="3.200" height="3.200" fill="#4d9bf5"/><path d="M605 287.500h3M606.500 286v3" stroke="#4d9bf5"/>
<path d="M599 304.500h16M599 314.500h16M602.500 301.500v16M612.500 301.500v16M600 309l5 7" stroke="#d2d2d2" stroke-width="1.200"/><rect x="603.500" y="305.500" width="8" height="8" fill="#4d9bf5"/><path d="M604 309l4-3.500M604 313l7.500-7M607 313.500l4.500-4" stroke="#2b5fb0" stroke-width=".8"/>
<path d="M648.500 268.500l8-9.500 6 5-8 9.500z" fill="#4d9bf5"/><path d="M648.500 268.500l2.200-2.600 6 5-2.200 2.600z" fill="#d9363e"/>
<path d="M671.500 262.500l3-3.500h11l-3 3.500zM682.500 262.500l3-3.500v10l-3 3.500z" fill="#e8e8e8"/><rect x="671.500" y="262.500" width="11" height="10" fill="#b8b8b8"/>
<rect x="694.500" y="258.500" width="10" height="10" fill="#d2d2d2"/><rect x="698.500" y="262.500" width="10.500" height="10" fill="#d2d2d2" stroke="#404040" stroke-width=".8"/><rect x="699.500" y="263" width="4.500" height="4.500" fill="#4d9bf5" stroke="#d2d2d2" stroke-width="1"/>
<rect x="718" y="257.500" width="7" height="7" fill="#4d9bf5"/><rect x="727" y="257.500" width="7" height="7" fill="#d2d2d2"/><rect x="718" y="266.500" width="7" height="7" fill="#d2d2d2"/><rect x="727" y="266.500" width="7" height="7" fill="#d2d2d2"/>
<path d="M756.500 258v14.500" stroke="#d2d2d2" stroke-width="1.300"/><rect x="759" y="259" width="7" height="5" fill="#4d9bf5"/><rect x="759" y="266" width="11" height="5" fill="#4d9bf5"/>
<path d="M647.500 294.500v-9h4v-5.500h11v4h-7v5.500h7M647.500 294.500h15" fill="none" stroke="#4d9bf5" stroke-width="1.300"/><path d="M651 291.500v-3h4v-5.500h7.500M651 291.500h11.500" fill="none" stroke="#d2d2d2" stroke-width="1.100"/>
<rect x="671" y="281.500" width="6" height="12" fill="#c4c4c4"/><path d="M679 281.500l6.500 12h-6.500z" fill="#4d9bf5"/><path d="M673 288h7m-2-2l2 2-2 2" stroke="#333" fill="none"/>
<path d="M700.500 281l-6 12h6z" fill="#d2d2d2"/><path d="M703.500 281l6 12h-6z" fill="#4d9bf5"/><path d="M702 280v15" stroke="#e8e8e8" stroke-dasharray="2 1.200"/>
<path d="M722 294.500v-3q0-8 8-8h4v11z" fill="#d2d2d2"/><path d="M718.500 290q1-8 9-10.500" fill="none" stroke="#4d9bf5" stroke-width="1.400"/>
<path d="M756 287h14" stroke="#d2d2d2" stroke-width="1.300" stroke-dasharray="2 1.300"/><path d="M763.500 279.500v15.500" stroke="#d2d2d2" stroke-width="1.300"/><rect x="762" y="282" width="3" height="3.500" fill="#4d9bf5"/><rect x="762" y="289" width="3" height="3.500" fill="#4d9bf5"/>
<path d="M655 301.500v15.500M647.500 309.500h15.500" stroke="#4d9bf5" stroke-width="1.500"/><path d="M655 301l-3 3.500h6zM655 317.500l-3-3.500h6zM647 309.500l3.500-3v6zM663 309.500l-3.500-3v6z" fill="#4d9bf5"/><rect x="653.300" y="307.800" width="3.400" height="3.400" fill="#404040" stroke="#d2d2d2" stroke-width="1"/>
<path d="M678.500 303.500a6.300 6.300 0 1 0 6 4.500" fill="none" stroke="#d2d2d2" stroke-width="1.200"/><path d="M677 301l4.500 2-4 2.500z" fill="#4d9bf5"/>
<circle cx="697.500" cy="304.500" r="3.500" fill="#b8b8b8"/><circle cx="703.500" cy="312.500" r="3.700" fill="#4d9bf5"/><circle cx="706.500" cy="313" r="3" fill="none" stroke="#4d9bf5"/><path d="M701.500 303.500q4 0 4 4m-1.800-1.200l1.800 2 1.800-2" fill="none" stroke="#d2d2d2" stroke-width="1"/>
<path d="M718 309.500h5" stroke="#4d9bf5" stroke-width="1.300"/><path d="M727 309.500h7" stroke="#e05050" stroke-width="1.300" stroke-dasharray="2.500 1.200"/><path d="M727 301.500l-3.500 15.500" stroke="#d2d2d2" stroke-width="1.300"/>
<rect x="756" y="301.500" width="14" height="14" fill="none" stroke="#4d9bf5" stroke-width="1.400" stroke-dasharray="4 2.500"/><rect x="755.500" y="309" width="8" height="8" fill="#d2d2d2"/>
<path d="M804 265l16-7.500 16 7.500-16 7.500z" fill="#d2d2d2"/><path d="M804 271.500l3.500-1.600 12.500 5.800 6-2.800v3l-6 2.800zM804 278l3.500-1.600 12.500 5.800 6-2.800v3l-6 2.800z" fill="#d2d2d2"/><rect x="828" y="273" width="8.500" height="12" fill="#4d9bf5"/><path d="M828 273h8.500v2.200h-8.500z" fill="#e8e8e8"/><path d="M830.500 278.500h3.500M830.500 282h3.500" stroke="#fff" stroke-width="1.400"/>
<path d="M846 262l8-4 8 4-8 4z" fill="#d2d2d2"/>
<path d="M846 265.2l2-1 6 3 6-3 2 1-8 4z" fill="#d2d2d2"/>
<path d="M846 268.4l2-1 6 3 6-3 2 1-8 4z" fill="#d2d2d2"/>
<circle cx="860" cy="269" r="2.300" fill="#f5b041"/><rect x="859" y="271" width="2" height="2" fill="#f5b041"/>
<path d="M870 262l8-4 8 4-8 4z" fill="#d2d2d2"/>
<path d="M870 265.2l2-1 6 3 6-3 2 1-8 4z" fill="#d2d2d2"/>
<path d="M870 268.4l2-1 6 3 6-3 2 1-8 4z" fill="#d2d2d2"/>
<circle cx="883.500" cy="269.500" r="2.800" fill="#f5b041"/><path d="M880 266l7 7m0-7l-7 7" stroke="#f5b041" stroke-width=".8"/>
<path d="M894 262l8-4 8 4-8 4z" fill="#d2d2d2"/>
<rect x="902" y="268" width="5" height="4" fill="#1f9a3a"/><path d="M906 268v-1.500a2 2 0 0 1 4 0" fill="none" stroke="#1f9a3a" stroke-width="1.100"/>
<path d="M918 262l8-4 8 4-8 4z" fill="#d2d2d2"/>
<path d="M918 265.2l2-1 6 3 6-3 2 1-8 4z" fill="#d2d2d2"/>
<path d="M918 268.4l2-1 6 3 6-3 2 1-8 4z" fill="#d2d2d2"/>
<path d="M927 273l6-2m-2.500-1.800l2.700 1.800-1.800 2.500" fill="none" stroke="#4d9bf5" stroke-width="1.100"/>
<path d="M942 263l8-4 8 4-8 4z" fill="#4d9bf5"/><circle cx="950" cy="260" r="2.800" fill="#e6edf7"/>
<path d="M942 266.200l2-1 6 3 6-3 2 1-8 4zM942 269.400l2-1 6 3 6-3 2 1-8 4z" fill="#d2d2d2"/>
<path d="M966 263.5l8-4 8 4-8 4z" fill="#d2d2d2"/>
<path d="M966 266.7l2-1 6 3 6-3 2 1-8 4z" fill="#d2d2d2"/>
<path d="M966 269.9l2-1 6 3 6-3 2 1-8 4z" fill="#d2d2d2"/>
<path d="M967 258.500h7M968 261h7" stroke="#4d9bf5" stroke-width="1.100"/>
<path d="M990 262l8-4 8 4-8 4z" fill="#d2d2d2"/>
<path d="M990 265.2l2-1 6 3 6-3 2 1-8 4z" fill="#d2d2d2"/>
<path d="M990 268.4l2-1 6 3 6-3 2 1-8 4z" fill="#d2d2d2"/>
<circle cx="1003" cy="268.500" r="2.300" fill="none" stroke="#4d9bf5" stroke-width="1.300"/>
<path d="M846 283l8-4 8 4-8 4z" fill="#d2d2d2"/>
<circle cx="859" cy="289.500" r="2.200" fill="#4d9bf5"/><rect x="858.200" y="291.500" width="1.600" height="2" fill="#4d9bf5"/>
<path d="M870 283l8-4 8 4-8 4z" fill="#d2d2d2"/>
<path d="M882.500 288v6M880 289.500l5 3M885 289.500l-5 3" stroke="#4d9bf5" stroke-width="1"/>
<path d="M894 283l8-4 8 4-8 4z" fill="#d2d2d2"/>
<rect x="903" y="290" width="6" height="5" fill="#f5b041"/><path d="M904.500 290v-1.500a1.500 1.500 0 0 1 3 0v1.500" fill="none" stroke="#f5b041" stroke-width="1.100"/>
<path d="M918 284l8-4 8 4-8 4z" fill="#d2d2d2"/>
<path d="M918 287.2l2-1 6 3 6-3 2 1-8 4z" fill="#d2d2d2"/>
<path d="M918 290.4l2-1 6 3 6-3 2 1-8 4z" fill="#d2d2d2"/>
<path d="M933 290.500l-6 2m2.500 1.800l-2.700-1.800 1.800-2.500" fill="none" stroke="#4d9bf5" stroke-width="1.100"/>
<path d="M942 283l8-4 8 4-8 4z" fill="#d2d2d2"/>
<path d="M942 286.2l2-1 6 3 6-3 2 1-8 4z" fill="#d2d2d2"/>
<path d="M942 289.4l2-1 6 3 6-3 2 1-8 4z" fill="#d2d2d2"/>
<path d="M951 292.500l2 2 4-4.500" fill="none" stroke="#1f9a3a" stroke-width="1.200"/>
<path d="M966 283.500l8-4 8 4-8 4z" fill="#d2d2d2"/><path d="M966 291.500l8-4 8 4-8 4z" fill="#4d9bf5"/><circle cx="974" cy="281.500" r="2.800" fill="#e6edf7"/><circle cx="974" cy="290" r="2.800" fill="#e6edf7"/><path d="M967 285.500v3h3" fill="none" stroke="#4d9bf5"/>
<path d="M990 285l8-4 8 4-8 4z" fill="#d2d2d2"/>
<path d="M990 288.2l2-1 6 3 6-3 2 1-8 4z" fill="#d2d2d2"/>
<path d="M990 291.4l2-1 6 3 6-3 2 1-8 4z" fill="#d2d2d2"/>
<path d="M990.500 280.500h6m-4-2l-2 2 2 2" fill="none" stroke="#4d9bf5" stroke-width="1.100"/>
<circle cx="852.500" cy="307.500" r="4.200" fill="#f5b041"/><rect x="850.500" y="311" width="4" height="3.500" fill="#f5b041"/>
<circle cx="868.500" cy="309" r="3.600" fill="#f5b041"/><path d="M868.500 302.500v13M862 309h13M864 304.500l9 9M873 304.500l-9 9" stroke="#f5b041" stroke-width="1"/>
<rect x="878.500" y="308.500" width="8" height="6" fill="#1f9a3a"/><path d="M885 308.500v-2a2.500 2.500 0 0 1 5 0v1" fill="none" stroke="#1f9a3a" stroke-width="1.400"/>
<rect x="894.500" y="303.500" width="11.500" height="11.500" fill="#fff" stroke="#000" stroke-width="1.200"/>
<path d="M1017.500 307.500h6l-3 3.500z" fill="#d0d0d0"/>
<text x="1049.500" y="285.500" font-family="Liberation Sans,sans-serif" font-size="32" fill="#d2d2d2" stroke="#d2d2d2" stroke-width=".9" textLength="23" lengthAdjust="spacingAndGlyphs">A</text>
<rect x="1086.500" y="259.500" width="14.500" height="2.500" fill="#4d9bf5"/>
<rect x="1086.5" y="263.5" width="4.300" height="3" fill="#d2d2d2"/>
<rect x="1091.5" y="263.5" width="4.300" height="3" fill="#d2d2d2"/>
<rect x="1096.5" y="263.5" width="4.300" height="3" fill="#d2d2d2"/>
<rect x="1086.5" y="267.5" width="4.300" height="3" fill="#d2d2d2"/>
<rect x="1091.5" y="267.5" width="4.300" height="3" fill="#d2d2d2"/>
<rect x="1096.5" y="267.5" width="4.300" height="3" fill="#d2d2d2"/>
<path d="M1088 293l3.500-8h5" fill="none" stroke="#d2d2d2" stroke-width="1.200"/><circle cx="1098.500" cy="284" r="2.500" fill="none" stroke="#4d9bf5" stroke-width="1.300"/><path d="M1087 294l2.500-.5-1.500-2z" fill="#d2d2d2"/>
<path d="M1086 303v12M1100.500 303v12M1086 309h14.500M1089 307l-3 2 3 2M1097.500 307l3 2-3 2" fill="none" stroke="#d2d2d2" stroke-width="1.100"/>
<path d="M1144 259h14l6.500 6.500v18.500h-20.500z" fill="#d2d2d2"/><path d="M1158 259l6.500 6.500h-6.500z" fill="#aaa"/><rect x="1138.500" y="267.500" width="18" height="13" fill="none" stroke="#4d9bf5" stroke-width="1.300"/><rect x="1137" y="279" width="3" height="3" fill="#4d9bf5"/><circle cx="1157" cy="280.500" r="6" fill="none" stroke="#4d9bf5" stroke-width="1.500"/>
<path d="M1179.500 258.500v12M1191 258.500v12" stroke="#d2d2d2" stroke-width="1"/><rect x="1178" y="261.500" width="3" height="6" fill="#d2d2d2"/><rect x="1189.500" y="261.500" width="3" height="6" fill="#d2d2d2"/><path d="M1183 264.500h4.500m-1.500-1.500l1.500 1.500-1.500 1.500" fill="none" stroke="#d2d2d2"/>
<rect x="1178.500" y="281.500" width="9" height="7" fill="none" stroke="#d2d2d2" stroke-width="1.100"/><rect x="1177" y="287" width="2.600" height="2.600" fill="#d2d2d2"/><circle cx="1188" cy="288" r="4.600" fill="none" stroke="#d2d2d2" stroke-width="1.100"/>
<rect x="1178.500" y="304.500" width="9" height="7" fill="none" stroke="#d2d2d2" stroke-width="1.100"/><rect x="1177" y="310" width="2.600" height="2.600" fill="#d2d2d2"/><circle cx="1188" cy="311" r="4.600" fill="none" stroke="#d2d2d2" stroke-width="1.100"/><path d="M1187 307l4-4.500" stroke="#f5b041" stroke-width="1.600"/><path d="M1191 302.500l1-1" stroke="#e0443a" stroke-width="1.600"/>
<rect x="1205.7" y="259.7" width="11" height="11" fill="none" stroke="#d2d2d2" stroke-width="1.400"/><rect x="1209" y="263" width="4.400" height="4.400" fill="#d2d2d2"/>
<rect x="1223.7" y="259.7" width="11" height="11" fill="none" stroke="#d2d2d2" stroke-width="1.400"/><rect x="1227" y="263" width="4.400" height="4.400" fill="#d2d2d2"/>
<rect x="1205.7" y="277.2" width="11" height="11" fill="none" stroke="#d2d2d2" stroke-width="1.400"/><rect x="1209" y="280.5" width="4.400" height="4.400" fill="#d2d2d2"/>
<path d="M1220.500 259v4M1220.500 266v5M1220.500 277v3M1220.500 284v4.500M1224 277.500h6M1233 277.500h2.500M1224.500 280v8.500M1228 282.500h7M1231.500 284v4.500M1235 284v4.500M1228 286.500v2" stroke="#d2d2d2" stroke-width="1.500" fill="none"/>
<path d="M1258.500 268.500l17-8 5 9.500-10.500 15.500z" fill="#4d9bf5"/><path d="M1272 262l9-4.500 5 2.500-2 3.500 3 1.500-6 5z" fill="#f5b041"/>
<path d="M414.500 352v1.500M417 352v1.500M414.500 355v1.500M417 355v1.500M414.500 358v1.500M417 358v1.500M414.500 361v1.500M417 361v1.500M414.500 364v1.500M417 364v1.500" stroke="#e8e8e8" stroke-width="1.200"/>
<rect x="426" y="356" width="14.500" height="9" rx="1" fill="#e39a1d"/><rect x="426" y="356" width="14.500" height="3" fill="#f4b843"/><rect x="432" y="359" width="2.500" height="2.500" fill="#444"/><path d="M427 352h7l1 1.500h-8z" fill="#9aa6b6"/><path d="M437.500 350v5" stroke="#c0392b" stroke-width="1.500"/><path d="M430.500 353.500v2.500h5v-2.500" fill="none" stroke="#b8b8b8"/>
<circle cx="456" cy="357.500" r="8" fill="#cfcfcf"/><path d="M453.500 355.500a2.600 2.600 0 1 1 3.800 2.300q-1.300.7-1.300 2.200" fill="none" stroke="#404040" stroke-width="1.300"/><circle cx="456" cy="362.300" r=".9" fill="#404040"/>
</svg>
<svg class="abs" style="left:412px;top:370px" width="150" height="22" viewBox="412 370 150 22"><path d="M429 392L437 376Q439 373 443 373H530Q534 373 536 376L545 392Z" fill="#333"/><path d="M424.5 377l-5 5 5 5z" fill="none" stroke="#5c5c5c"/><path d="M532.5 380l7 7m0-7l-7 7" stroke="#c8c8c8" stroke-width="1.1"/></svg>
<div class="c" style="left:440px;top:375px;font-size:11.500px;line-height:14px;font-weight:bold;color:#fff">Drawing1.dwg</div>
<div class="abs" style="left:412px;top:391px;width:878px;height:1px;background:#545454"></div>
<div class="abs" style="left:415px;top:393px;width:880px;height:425px;background:#a0a0a0"></div>
<div class="abs" style="left:416px;top:394px;width:880px;height:424px;background:#606060"></div>
<div class="abs" style="left:417px;top:395px;width:880px;height:423px;background:#a0a0a0"></div>
<div class="abs" style="left:418px;top:396px;width:880px;height:422px;background:#555"></div>
<div class="abs" style="left:419px;top:397px;width:880px;height:419px;background:#212830"></div>
<div class="abs" style="left:412px;top:183px;width:1px;height:660px;background:#2a2a2a"></div>
<svg class="abs" style="left:419px;top:397px" width="871" height="419" viewBox="419 397 871 419"><g shape-rendering="crispEdges" fill="none" stroke-width="1">
<path d="M456.5 397V816M539.5 397V816M580.5 397V816M622.5 397V816M663.5 397V816M746.5 397V816M787.5 397V816M828.5 397V816M870.5 397V816M952.5 397V816M994.5 397V816M1035.5 397V816M1076.5 397V816M1159.5 397V816M1200.5 397V816M1242.5 397V816M1283.5 397V816M419 400.5H1290M419 483.5H1290M419 524.5H1290M419 565.5H1290M419 607.5H1290M419 689.5H1290M419 731.5H1290M419 772.5H1290M419 813.5H1290" stroke="#272e3a"/>
<path d="M498.5 397V816M704.5 397V816M911.5 397V816M1118.5 397V816M419 441.5H1290M419 648.5H1290" stroke="#30384a"/>
<path d="M911.5 397V569" stroke="#1f6b22"/>
<path d="M955 648.5H1290" stroke="#7d2a2d"/>
<path d="M911.5 615V644M916 648.5H955" stroke="#fff"/>
<rect x="907.5" y="644.5" width="8" height="8" stroke="#fff"/>
</g>
<path d="M960 638l10 11M970 638l-10 11" stroke="#e8e8e8" stroke-width="1.1" fill="none"/>
<g shape-rendering="crispEdges" stroke="#f00"><path d="M569.5 427.5H767.5"/></g>
<g fill="none" stroke="#f00" stroke-width="1">
<path d="M569.5 427.5V440M566.5 432.5L569.5 440.5L572.5 432.5"/>
<path d="M594.2 427.5V440M591.2 432.5L594.2 440.5L597.2 432.5"/>
<path d="M619.0 427.5V440M616.0 432.5L619.0 440.5L622.0 432.5"/>
<path d="M643.8 427.5V440M640.8 432.5L643.8 440.5L646.8 432.5"/>
<path d="M668.5 427.5V440M665.5 432.5L668.5 440.5L671.5 432.5"/>
<path d="M693.2 427.5V440M690.2 432.5L693.2 440.5L696.2 432.5"/>
<path d="M718.0 427.5V440M715.0 432.5L718.0 440.5L721.0 432.5"/>
<path d="M742.8 427.5V440M739.8 432.5L742.8 440.5L745.8 432.5"/>
<path d="M767.5 427.5V440M764.5 432.5L767.5 440.5L770.5 432.5"/>
</g>
<g shape-rendering="crispEdges" fill="none" stroke="#0f0" stroke-width="1">
<rect x="569.5" y="450.5" width="198" height="99"/>
<path d="M569 446.500H762M767 552.500H575" stroke-dasharray="9.500 7"/>
<path d="M566.500 458V549M770.500 458V549" stroke-dasharray="9.500 7"/>
<rect x="569.5" y="608.5" width="198" height="100"/>
<path d="M569 605.500H688M767 711.500H575" stroke-dasharray="9.500 7"/>
<path d="M566.500 616V708M770.500 616V708" stroke-dasharray="9.500 7"/>
</g>
<g shape-rendering="crispEdges" stroke="#c030c0"><path d="M620 549.5H716"/></g>
<g shape-rendering="crispEdges" fill="none" stroke="#0ff" stroke-width="1">
<path d="M527 450.5H569M527 549.5H569M534.5 448V552"/>
<path d="M569.5 553V595M767.5 553V569M571 585.5H688"/>
</g>
<g fill="none" stroke="#0ff" stroke-width="1"><path d="M532 448l5 5M532 547l5 5M567 588l5-5"/></g>
<g shape-rendering="crispEdges" stroke="#0ff" stroke-width="2"><path d="M648 500H688M668.500 490V509"/></g>
<g shape-rendering="crispEdges" stroke="#fff" stroke-width="1"><path d="M668.500 509V598"/></g>
<g shape-rendering="crispEdges" fill="none" stroke="#f00"><path d="M800.500 450V549M787.500 450V549"/></g>
<g fill="none" stroke="#f00" stroke-width="1">
<path d="M800.5 450.5H788M796 447.0L787.5 450.5L796 454.0"/>
<path d="M800.5 462.8H788M796 459.3L787.5 462.8L796 466.3"/>
<path d="M800.5 475.1H788M796 471.6L787.5 475.1L796 478.6"/>
<path d="M800.5 487.4H788M796 483.9L787.5 487.4L796 490.9"/>
<path d="M800.5 499.8H788M796 496.2L787.5 499.8L796 503.2"/>
<path d="M800.5 512.1H788M796 508.6L787.5 512.1L796 515.6"/>
<path d="M800.5 524.4H788M796 520.9L787.5 524.4L796 527.9"/>
<path d="M800.5 536.7H788M796 533.2L787.5 536.7L796 540.2"/>
<path d="M800.5 549.0H788M796 545.5L787.5 549.0L796 552.5"/>
</g>
<g shape-rendering="crispEdges" stroke="#f00" stroke-width="2"><path d="M569 659H767M669 608V708"/></g>
<g font-family="Liberation Serif,serif" font-weight="400" stroke-width=".25">
<text x="668.5" y="425" fill="#f00" stroke="#f00" font-size="13" textLength="35" lengthAdjust="spacingAndGlyphs">2000.0</text>
<text x="668.5" y="462" fill="#0ff" stroke="#0ff" font-size="13" textLength="16" lengthAdjust="spacingAndGlyphs">0.0</text>
<text x="670" y="490" fill="#0ff" stroke="#0ff" font-size="13" textLength="22" lengthAdjust="spacingAndGlyphs">27.0</text>
<text x="690" y="501" fill="#0ff" stroke="#0ff" font-size="12" textLength="15" lengthAdjust="spacingAndGlyphs">9.9</text>
<text x="654" y="547" fill="#0ff" stroke="#0ff" font-size="13" textLength="17" lengthAdjust="spacingAndGlyphs">0.0</text>
<text x="660" y="585" fill="#0ff" stroke="#0ff" font-size="12" textLength="21" lengthAdjust="spacingAndGlyphs">6000</text>
<text x="533.5" y="509" fill="#0ff" stroke="#0ff" font-size="12" transform="rotate(-90 533.5 509)" textLength="21" lengthAdjust="spacingAndGlyphs">3000</text>
<text x="581.5" y="506" fill="#0ff" stroke="#0ff" font-size="13" transform="rotate(-90 581.5 506)" textLength="16" lengthAdjust="spacingAndGlyphs">0.0</text>
<text x="766" y="506" fill="#0ff" stroke="#0ff" font-size="13" transform="rotate(-90 766 506)" textLength="16" lengthAdjust="spacingAndGlyphs">0.0</text>
<text x="811.5" y="509" fill="#f00" stroke="#f00" font-size="13" transform="rotate(-90 811.5 509)" textLength="22" lengthAdjust="spacingAndGlyphs">30.0</text>
<text x="570.5" y="657.5" fill="#f00" stroke="#f00" font-size="11.5" textLength="16" lengthAdjust="spacingAndGlyphs">750</text>
<text x="570.5" y="670" fill="#ff0" stroke="#ff0" font-size="11.5" textLength="16" lengthAdjust="spacingAndGlyphs">750</text>
<text x="629.5" y="657.5" fill="#f00" stroke="#f00" font-size="11.5" textLength="16" lengthAdjust="spacingAndGlyphs">750</text>
<text x="629.5" y="670" fill="#ff0" stroke="#ff0" font-size="11.5" textLength="16" lengthAdjust="spacingAndGlyphs">750</text>
<text x="718" y="657.5" fill="#f00" stroke="#f00" font-size="11.5" textLength="16" lengthAdjust="spacingAndGlyphs">750</text>
<text x="718" y="670" fill="#ff0" stroke="#ff0" font-size="11.5" textLength="16" lengthAdjust="spacingAndGlyphs">750</text>
<text x="666.5" y="633.5" fill="#f00" stroke="#f00" font-size="11.5" transform="rotate(-90 666.5 633.5)" textLength="16" lengthAdjust="spacingAndGlyphs">750</text>
<text x="680" y="633.5" fill="#ff0" stroke="#ff0" font-size="11.5" transform="rotate(-90 680 633.5)" textLength="16" lengthAdjust="spacingAndGlyphs">600</text>
<text x="666.5" y="678.5" fill="#f00" stroke="#f00" font-size="11.5" transform="rotate(-90 666.5 678.5)" textLength="16" lengthAdjust="spacingAndGlyphs">600</text>
<text x="680" y="678.5" fill="#ff0" stroke="#ff0" font-size="11.5" transform="rotate(-90 680 678.5)" textLength="16" lengthAdjust="spacingAndGlyphs">750</text>
<text x="666.5" y="707.5" fill="#f00" stroke="#f00" font-size="11.5" transform="rotate(-90 666.5 707.5)" textLength="16" lengthAdjust="spacingAndGlyphs">750</text>
<text x="680" y="707.5" fill="#ff0" stroke="#ff0" font-size="11.5" transform="rotate(-90 680 707.5)" textLength="16" lengthAdjust="spacingAndGlyphs">600</text>
</g></svg>
<div class="abs" style="left:416px;top:816px;width:876px;height:2px;background:#fff"></div>
<div class="abs" style="left:412px;top:818px;width:878px;height:18px;background:#404040"></div>
<div class="abs" style="left:412px;top:836px;width:878px;height:1px;background:#2a2a2a"></div>
<div class="abs" style="left:412px;top:837px;width:878px;height:2px;background:#f4f4f4"></div>
<svg class="abs" style="left:460px;top:818px" width="190" height="19" viewBox="460 818 190 19"><path d="M468.500 818.500L476.500 834.500H509.500L517 818.500" fill="#2b2b2b" stroke="#8c8c8c"/><path d="M513 826.500L517 834.500H556L563.500 818.500M560 826.500L564 834.500H602.500L609.500 818.500M606 826.500L611 834.500H631.500L638.500 818.500" fill="none" stroke="#8c8c8c"/></svg>
<div class="c" style="left:478px;top:817px;font-size:14.500px;line-height:17px;font-weight:bold;color:#fff">模型</div>
<div class="c" style="left:520px;top:817px;font-size:13px;line-height:17px;color:#f0f0f0">布局<span style="font-size:11.500px">1</span></div>
<div class="c" style="left:567px;top:817px;font-size:13px;line-height:17px;color:#f0f0f0">布局<span style="font-size:11.500px">2</span></div>
<div class="c" style="left:617.500px;top:818px;font-size:12px;line-height:17px;color:#f0f0f0">+</div>
<div class="abs" style="left:688px;top:569px;width:249px;height:21px;background:#2c2c2c"></div>
<div class="abs" style="left:708px;top:570px;width:78px;height:19px;background:#3b3b3b"></div>
<div class="c" style="left:710px;top:571px;font-size:12px;line-height:16px;color:#f0f0f0">指定插入点或</div>
<div class="abs" style="left:791px;top:569px;width:146px;height:20px;background:#fff;border:1px solid #d9d9d9"></div>
<div class="abs" style="left:793px;top:571px;width:127px;height:16px;background:#0078d7"></div>
<div class="c" style="left:794px;top:571px;font-size:12px;line-height:16px;color:#fff">-7358.8435,2987.0823</div>
<div class="abs" style="left:688px;top:590px;width:249px;height:2px;background:#4a4a4a"></div>
<div class="abs" style="left:688px;top:592px;width:249px;height:23px;background:#333"></div>
<div class="abs" style="left:737px;top:593px;width:1px;height:20px;background:#555"></div>
<div class="abs" style="left:784px;top:593px;width:1px;height:20px;background:#555"></div>
<div class="abs" style="left:800px;top:593px;width:1px;height:20px;background:#555"></div>
<div class="abs" style="left:815px;top:593px;width:1px;height:20px;background:#555"></div>
<div class="abs" style="left:830px;top:593px;width:1px;height:20px;background:#555"></div>
<div class="c" style="left:694px;top:594px;font-size:12px;line-height:16px;color:#f0f0f0">基点(B)</div>
<div class="c" style="left:742px;top:594px;font-size:12px;line-height:16px;color:#f0f0f0">比例(S)</div>
<div class="c" style="left:789px;top:594px;font-size:12px;line-height:16px;color:#f0f0f0">X</div>
<div class="c" style="left:805px;top:594px;font-size:12px;line-height:16px;color:#f0f0f0">Y</div>
<div class="c" style="left:820px;top:594px;font-size:12px;line-height:16px;color:#f0f0f0">Z</div>
<div class="c" style="left:835px;top:594px;font-size:12px;line-height:16px;color:#f0f0f0">旋转(R)</div>
<svg class="abs" style="left:688px;top:569px" width="249" height="46" viewBox="688 569 249 46"><path d="M915 597v11l-7-5.5zM927 597v11l7-5.5z" fill="#6e6e6e"/><path d="M697 572h8l2 2v11h-10z" fill="#cfcfcf"/><rect x="691.5" y="576.5" width="11" height="8" fill="none" stroke="#4d9bf5" stroke-width="1.3"/><circle cx="703" cy="585" r="3.6" fill="none" stroke="#4d9bf5" stroke-width="1.3"/></svg>
</div>
</div>
<!-- red annotation arrow -->
<svg class="abs" style="left:640px;top:176px" width="50" height="222" viewBox="640 176 50 222"><path d="M677.300 180L661.300 378" stroke="#f00" stroke-width="2.600"/><path d="M653.300 372l8 22 9.500-21.500c-5.500 3-12 3-17.500-.5z" fill="#f00"/></svg>
</body>
</html>
